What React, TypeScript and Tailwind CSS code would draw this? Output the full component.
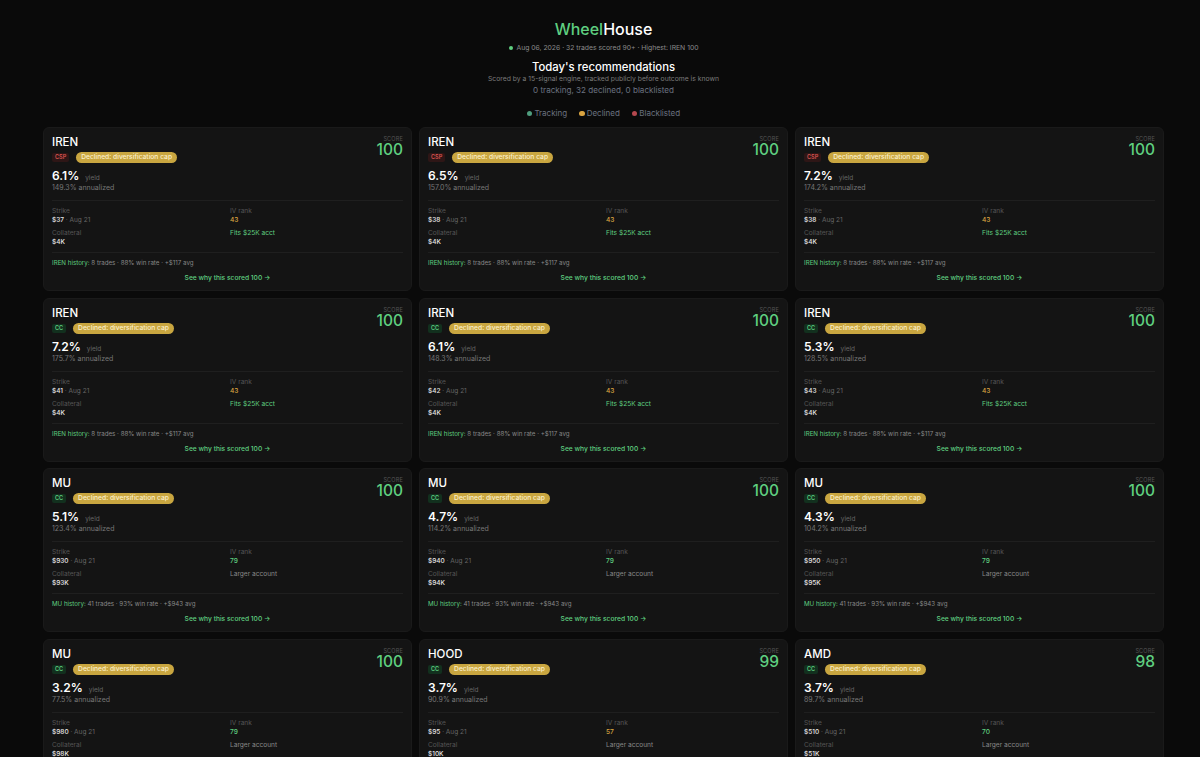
import React, { FC } from 'react';

interface Rec {
  ticker: string;
  type: 'CSP' | 'CC';
  score: number;
  yieldPct: string;
  annualized: string;
  strike: string;
  ivRank: number;
  collateral: string;
  fit: string;
  history?: string;
}

const irenHistory = '8 trades · 88% win rate · +$117 avg';
const muHistory = '41 trades · 93% win rate · +$943 avg';

const recs: Rec[] = [
  { ticker: 'IREN', type: 'CSP', score: 100, yieldPct: '6.1%', annualized: '149.3%', strike: '$37', ivRank: 43, collateral: '$4K', fit: 'Fits $25K acct', history: irenHistory },
  { ticker: 'IREN', type: 'CSP', score: 100, yieldPct: '6.5%', annualized: '157.0%', strike: '$38', ivRank: 43, collateral: '$4K', fit: 'Fits $25K acct', history: irenHistory },
  { ticker: 'IREN', type: 'CSP', score: 100, yieldPct: '7.2%', annualized: '174.2%', strike: '$38', ivRank: 43, collateral: '$4K', fit: 'Fits $25K acct', history: irenHistory },
  { ticker: 'IREN', type: 'CC', score: 100, yieldPct: '7.2%', annualized: '175.7%', strike: '$41', ivRank: 43, collateral: '$4K', fit: 'Fits $25K acct', history: irenHistory },
  { ticker: 'IREN', type: 'CC', score: 100, yieldPct: '6.1%', annualized: '148.3%', strike: '$42', ivRank: 43, collateral: '$4K', fit: 'Fits $25K acct', history: irenHistory },
  { ticker: 'IREN', type: 'CC', score: 100, yieldPct: '5.3%', annualized: '128.5%', strike: '$43', ivRank: 43, collateral: '$4K', fit: 'Fits $25K acct', history: irenHistory },
  { ticker: 'MU', type: 'CC', score: 100, yieldPct: '5.1%', annualized: '123.4%', strike: '$930', ivRank: 79, collateral: '$93K', fit: 'Larger account', history: muHistory },
  { ticker: 'MU', type: 'CC', score: 100, yieldPct: '4.7%', annualized: '114.2%', strike: '$940', ivRank: 79, collateral: '$94K', fit: 'Larger account', history: muHistory },
  { ticker: 'MU', type: 'CC', score: 100, yieldPct: '4.3%', annualized: '104.2%', strike: '$950', ivRank: 79, collateral: '$95K', fit: 'Larger account', history: muHistory },
  { ticker: 'MU', type: 'CC', score: 100, yieldPct: '3.2%', annualized: '77.5%', strike: '$980', ivRank: 79, collateral: '$98K', fit: 'Larger account', history: muHistory },
  { ticker: 'HOOD', type: 'CC', score: 99, yieldPct: '3.7%', annualized: '90.9%', strike: '$95', ivRank: 57, collateral: '$10K', fit: 'Larger account' },
  { ticker: 'AMD', type: 'CC', score: 98, yieldPct: '3.7%', annualized: '89.7%', strike: '$510', ivRank: 70, collateral: '$51K', fit: 'Larger account' },
];

const RecCard: FC<Rec> = ({ ticker, type, score, yieldPct, annualized, strike, ivRank, collateral, fit, history }) => (
  <div className="h-[164px] rounded-[6px] border border-[#1a1a1a] bg-[#141414] px-2 pt-[6px]">
    <div className="flex justify-between">
      <div>
        <div className="text-[11.5px] font-medium leading-[16px] text-white">{ticker}</div>
        <div className="mt-[2px] flex items-center gap-[7px]">
          {type === 'CSP' ? (
            <span className="rounded-[2px] bg-[#2e1616] px-[3px] text-[5.5px] font-semibold leading-[9px] text-[#d9534f]">CSP</span>
          ) : (
            <span className="rounded-[2px] bg-[#12301e] px-[3px] text-[5.5px] font-semibold leading-[9px] text-[#5fcf80]">CC</span>
          )}
          <span className="rounded-full bg-[#c9a640] px-[5px] text-[6.7px] font-medium leading-[11px] text-[#fbf0cc]">Declined: diversification cap</span>
        </div>
      </div>
      <div className="text-right">
        <div className="mt-[1px] text-[5.5px] leading-[8px] tracking-[0.2px] text-[#555555]">SCORE</div>
        <div className="text-[15.5px] font-medium leading-[14px] text-[#5fcf80]">{score}</div>
      </div>
    </div>
    <div className="mt-[8px] flex items-baseline gap-[6px]">
      <span className="text-[12px] font-semibold leading-[10px] text-white">{yieldPct}</span>
      <span className="text-[6.5px] leading-[10px] text-[#666666]">yield</span>
    </div>
    <div className="text-[7px] leading-[10px] text-[#777777]">{annualized} annualized</div>
    <div className="mt-[7px] grid grid-cols-2 gap-x-[5px] border-t border-[#1f1f1f] pt-[6px] pb-[5px]">
      <div className="h-[22px]">
        <div className="text-[6.6px] leading-[9px] text-[#555555]">Strike</div>
        <div className="text-[6.5px] leading-[9px] text-[#666666]">
          <span className="font-medium text-[#e5e5e5]">{strike}</span> · Aug 21
        </div>
      </div>
      <div className="h-[22px]">
        <div className="text-[6.6px] leading-[9px] text-[#555555]">IV rank</div>
        <div className={ivRank >= 70 ? 'text-[6.6px] font-medium leading-[9px] text-[#5fcf80]' : 'text-[6.6px] font-medium leading-[9px] text-[#d9a441]'}>{ivRank}</div>
      </div>
      <div>
        <div className="text-[6.6px] leading-[9px] text-[#555555]">Collateral</div>
        <div className="text-[6.5px] font-medium leading-[9px] text-[#e5e5e5]">{collateral}</div>
      </div>
      <div className={fit === 'Larger account' ? 'text-[6.6px] leading-[9px] text-[#888888]' : 'text-[6.6px] leading-[9px] text-[#5fcf80]'}>{fit}</div>
    </div>
    <div className="border-t border-[#1f1f1f] pt-[5px]">
      {history && (
        <div className="text-[6.2px] leading-[9px] text-[#888888]">
          <span className="text-[#5fcf80]">{ticker} history:</span> {history}
        </div>
      )}
      <div className="mt-[6px] text-center text-[6.7px] font-medium leading-[10px] text-[#5fcf80]">See why this scored {score} →</div>
    </div>
  </div>
);

const LegendItem: FC<{ dot: string; label: string }> = ({ dot, label }) => (
  <div className="flex items-center gap-[2px]">
    <span className={`h-[5.5px] w-[5.5px] rounded-full ${dot}`} />
    <span>{label}</span>
  </div>
);

export default function App() {
  return (
    <div className="h-[757px] overflow-hidden bg-[#0a0a0a] pt-[19px] pr-[36px] pl-[43px] [font-family:Inter,'Liberation_Sans',sans-serif]">
      <div className="flex flex-col items-center text-center">
        <h1 className="text-[16px] font-medium leading-[21px] text-white">
          <span className="text-[#5fcf80]">Wheel</span>House
        </h1>
        <div className="mt-[3px] flex items-center gap-[4px] text-[6.8px] leading-[10px] text-[#8a8a8a]">
          <span className="h-[4px] w-[4px] rounded-full bg-[#5fcf80]" />
          Aug 06, 2026 · 32 trades scored 90+ · Highest: IREN 100
        </div>
        <h2 className="mt-[7px] text-[11.3px] font-medium leading-[15px] text-white">Today's recommendations</h2>
        <div className="-mt-[1px] text-[6.8px] leading-[9px] text-[#7a7a7a]">Scored by a 15-signal engine, tracked publicly before outcome is known</div>
        <div className="mt-[1px] text-[8.1px] leading-[12px] text-[#6b7280]">0 tracking, 32 declined, 0 blacklisted</div>
        <div className="mt-[12px] flex gap-[12px] text-[8px] leading-[11px] text-[#6b7280]">
          <LegendItem dot="bg-[#4f9d7e]" label="Tracking" />
          <LegendItem dot="bg-[#d9a441]" label="Declined" />
          <LegendItem dot="bg-[#b5484f]" label="Blacklisted" />
        </div>
      </div>
      <div className="mt-[8px] grid grid-cols-3 gap-x-[7px] gap-y-[6.67px]">
        {recs.map((rec, index) => (
          <RecCard key={index} {...rec} />
        ))}
      </div>
    </div>
  );
}
